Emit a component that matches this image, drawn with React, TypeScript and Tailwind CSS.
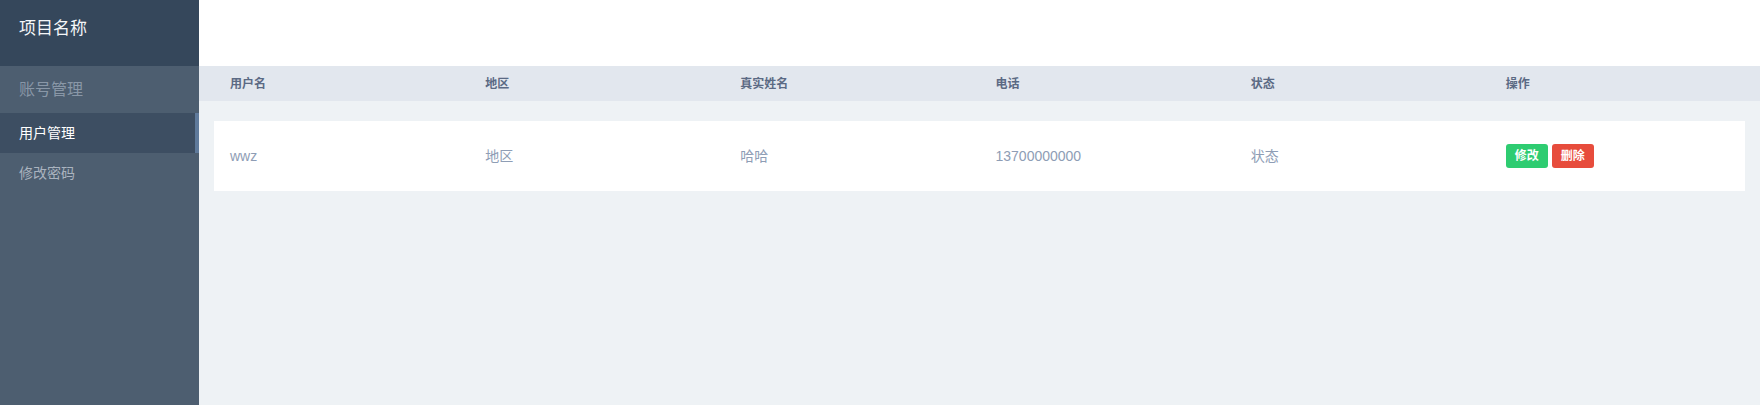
const columns = ['用户名', '地区', '真实姓名', '电话', '状态', '操作'];

const rows = [{ username: 'wwz', region: '地区', realName: '哈哈', phone: '13700000000', status: '状态' }];

function Sidebar() {
  return (
    <aside className="flex w-[199px] shrink-0 flex-col bg-[#4d5e70]">
      <div className="h-[66px] bg-[#35475b] pl-[19px] pt-[17px] text-[17px] leading-[24px] text-[#f4f6f8]">项目名称</div>
      <div className="flex h-[47px] items-center pl-[19px] text-[16px] text-[#8997a7]">账号管理</div>
      <nav className="flex flex-col">
        <a className="flex h-[40px] items-center border-r-4 border-[#5f7a9b] bg-[#3d4e62] pl-[19px] text-[14px] text-white">
          用户管理
        </a>
        <a className="flex h-[40px] items-center pl-[19px] text-[14px] text-[#aab3bf]">修改密码</a>
      </nav>
    </aside>
  );
}

export default function App() {
  return (
    <div className="flex h-screen w-full font-['Liberation_Sans','Noto_Sans_CJK_SC',sans-serif]">
      <Sidebar />
      <main className="flex flex-1 flex-col bg-[#eef2f5]">
        <header className="h-[66px] bg-white" />
        <div className="bg-[#e2e7ee] px-[15px]">
          <div className="grid h-[35px] grid-cols-6 items-center text-[12px] font-bold text-[#5b6a84]">
            {columns.map((c) => (
              <div key={c} className="pl-4">
                {c}
              </div>
            ))}
          </div>
        </div>
        <div className="px-[15px] pt-5">
          {rows.map((r) => (
            <div
              key={r.username}
              className="grid h-[70px] grid-cols-6 items-center bg-white text-[14px] text-[#8e9db5]"
            >
              <div className="pl-4">{r.username}</div>
              <div className="pl-4">{r.region}</div>
              <div className="pl-4">{r.realName}</div>
              <div className="pl-4">{r.phone}</div>
              <div className="pl-4">{r.status}</div>
              <div className="flex gap-1 pl-4">
                <button className="h-6 rounded-[3px] bg-[#2ecc71] px-[9px] text-[12px] font-bold text-white">修改</button>
                <button className="h-6 rounded-[3px] bg-[#e74c3c] px-[9px] text-[12px] font-bold text-white">删除</button>
              </div>
            </div>
          ))}
        </div>
      </main>
    </div>
  );
}
